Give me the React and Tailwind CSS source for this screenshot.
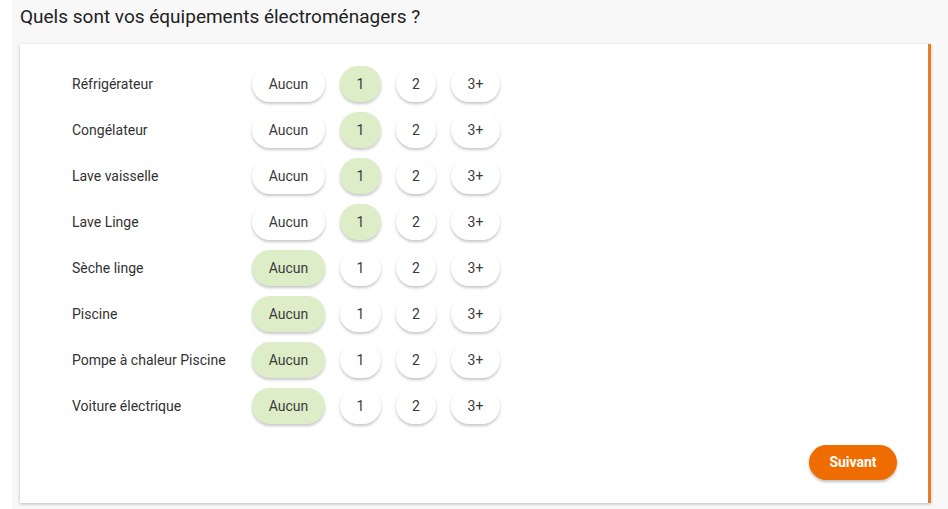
import React from "react";

const rows = [
  { label: "Réfrigérateur", value: "1" },
  { label: "Congélateur", value: "1" },
  { label: "Lave vaisselle", value: "1" },
  { label: "Lave Linge", value: "1" },
  { label: "Sèche linge", value: "Aucun" },
  { label: "Piscine", value: "Aucun" },
  { label: "Pompe à chaleur Piscine", value: "Aucun" },
  { label: "Voiture électrique", value: "Aucun" },
];

const options = [
  { key: "Aucun", className: "w-[73px]" },
  { key: "1", className: "w-[41px]" },
  { key: "2", className: "w-[40px]" },
  { key: "3+", className: "w-[49px]" },
];

export default function App() {
  return (
    <div className="w-[948px] h-[509px] bg-white overflow-hidden font-['Roboto',sans-serif]">
      <div className="ml-[12px] h-full bg-[#f8f8f8] pl-[8px] pr-[15px]">
        {/* Title */}
        <h1 className="pt-[5px] h-[44px] text-[19px] leading-[24px] text-[#222] font-normal">
          Quels sont vos équipements électroménagers ?
        </h1>

        {/* Card */}
        <div className="w-[911px] h-[459px] bg-white border-r-[3px] border-[#e67e22] shadow-[0_1px_3px_rgba(0,0,0,0.25)] pt-[22px] pl-[52px] pr-[31px] flex flex-col">
          <div className="flex flex-col gap-[10px]">
            {rows.map((row) => (
              <div key={row.label} className="flex items-center h-[36px]">
                <span className="w-[180px] text-[14px] text-[#333]">{row.label}</span>
                <div className="flex items-center gap-[15px]">
                  {options.map((opt) => (
                    <button
                      key={opt.key}
                      className={`${opt.className} h-[36px] rounded-full text-[14px] text-[#3a3a3a] shadow-[0_2px_3px_rgba(0,0,0,0.22)] ${
                        row.value === opt.key ? "bg-[#dcedc8]" : "bg-white"
                      }`}
                    >
                      {opt.key}
                    </button>
                  ))}
                </div>
              </div>
            ))}
          </div>

          <div className="flex justify-end mt-[21px]">
            <button className="w-[88px] h-[35px] rounded-full bg-[#ef6c00] text-white text-[14px] font-bold shadow-[0_2px_3px_rgba(0,0,0,0.25)]">
              Suivant
            </button>
          </div>
        </div>
      </div>
    </div>
  );
}
